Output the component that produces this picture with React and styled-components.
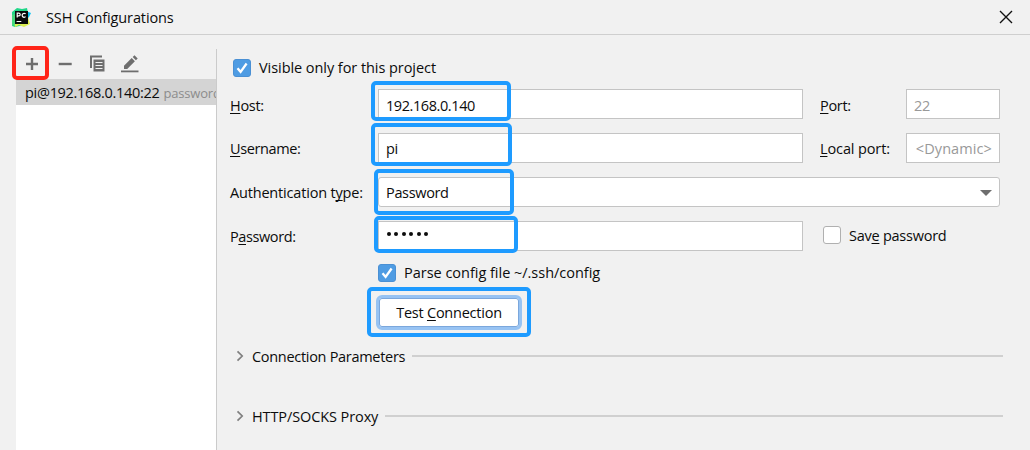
import React from "react";
import styled, { createGlobalStyle } from "styled-components";

const Global = createGlobalStyle`
  * { box-sizing: border-box; }
  body { margin: 0; background: #f1f1f1; overflow: hidden; }
`;
const Dialog = styled.div`
  position: relative;
  width: 1030px;
  height: 450px;
  overflow: hidden;
  display: flex;
  flex-direction: column;
  background: #f1f1f1;
  color: #0c0c0c;
  font: 14.5px/20px "Open Sans", "Noto Sans", sans-serif;
`;
const TitleBar = styled.header`
  display: flex;
  align-items: center;
  height: 35px;
  flex: none;
  padding: 0 16px 0 11px;
  border-bottom: 1px solid #cfcfcf;
`;
const Text = styled.span`
  white-space: pre;
  letter-spacing: ${(p) => p.$ls ?? -0.3}px;
  u { text-decoration-thickness: 1px; text-underline-offset: 2px; text-decoration-skip-ink: none; }
`;
const Title = styled(Text)`
  flex: 1;
  margin: 1px 0 0 14px;
`;
const Body = styled.div`
  display: flex;
  flex: 1;
`;
const Sidebar = styled.aside`
  display: flex;
  flex-direction: column;
  width: 201px;
  margin: 14px 0 0 16px;
  border-right: 1px solid #cbcbcb;
`;
const Toolbar = styled.div`
  display: flex;
  height: 30px;
  padding: 5px 0 0 6px;
  gap: 13px;
`;
const List = styled.div`
  flex: 1;
  background: #fff;
`;
const Entry = styled.div`
  display: flex;
  gap: 4px;
  height: 26px;
  padding: 4px 0 0 9px;
  overflow: hidden;
  background: #d4d4d4;
`;
const Hint = styled(Text)`
  color: #8c8c8c;
  font-size: 13px;
  line-height: 21px;
`;
const Form = styled.main`
  flex: 1;
  padding: 19px 0 0 13px;
`;
const Row = styled.div`
  display: flex;
  align-items: center;
  height: ${(p) => p.$h ?? 44}px;
  padding-left: ${(p) => p.$indent ?? 0}px;
`;
const Label = styled.div`
  width: ${(p) => p.$w ?? 148}px;
  margin-left: ${(p) => p.$gap ?? 0}px;
  padding-top: ${(p) => p.$top ?? 2}px;
`;
const Field = styled.div`
  display: flex;
  align-items: center;
  width: ${(p) => p.$w}px;
  height: 30px;
  padding: ${(p) => p.$top ?? 2}px 7px 0;
  border: 1px solid #c4c4c4;
  border-radius: ${(p) => (p.$combo ? 3 : 0)}px;
  background: #fff;
  color: ${(p) => (p.$muted ? "#999" : "#0c0c0c")};
  justify-content: space-between;
`;
const Dots = styled.div`
  display: flex;
  gap: 3.4px;
  margin: -7px 0 0 1px;
`;
const Dot = styled.i`
  width: 4px;
  height: 4px;
  border-radius: 50%;
  background: #0c0c0c;
`;
const CheckBox = styled.span`
  display: flex;
  align-items: center;
  justify-content: center;
  width: 18px;
  height: 18px;
  margin: ${(p) => (p.$on ? "0 8px 0 0" : "-3px 8px 0 0")};
  border: 1px solid ${(p) => (p.$on ? "#4a90d4" : "#b0b0b0")};
  border-radius: 3px;
  background: ${(p) => (p.$on ? "#4f9ce3" : "#fff")};
`;
const Button = styled.div`
  display: flex;
  align-items: center;
  justify-content: center;
  width: 146px;
  height: 35px;
  padding-top: 2px;
  border: 3px solid #97c3f3;
  border-radius: 6px;
  background: #fff;
  box-shadow: inset 0 0 0 1px #7ba7dc;
`;
const Rule = styled.div`
  flex: 1;
  height: 2px;
  margin: 0 27px 0 7px;
  background: #d0d0d0;
`;
const SectionTitle = styled(Text)`
  margin-left: 8px;
  padding-top: 1px;
`;
const Highlight = styled.div`
  position: absolute;
  left: ${(p) => p.$x}px;
  top: ${(p) => p.$y}px;
  width: ${(p) => p.$w}px;
  height: ${(p) => p.$h}px;
  border: 4px solid ${(p) => p.$c ?? "#1e9bff"};
  border-radius: 5px;
`;

const Check = ({ on }) => (
  <CheckBox $on={on}>
    {on && (
      <svg width="16" height="16" viewBox="0 0 16 16" fill="none" stroke="#fff" strokeWidth="2.3">
        <path d="M3.5 8.2 6.6 11.8 12.6 3.5" />
      </svg>
    )}
  </CheckBox>
);
const Section = ({ title, ls }) => (
  <Row $h={40} $indent={5}>
    <svg width="9" height="12" fill="none" stroke="#808080" strokeWidth="1.7"><path d="M2.5 1.3 7.2 6 2.5 10.7" /></svg>
    <SectionTitle $ls={ls}>{title}</SectionTitle>
    <Rule />
  </Row>
);
const Logo = () => (
  <svg width="21" height="21" viewBox="0 0 21 21">
    <path d="M1 5 6 1l5 1 5-1 1 5-4 12-9 2-3-1Z" fill="#21d789" />
    <path d="M15 4 20 6 18 10 15 13Z" fill="#07c3f2" />
    <path d="M3 15 5 14 16 17 17 10 19 17 13 20 8 18 4 20Z" fill="#dcef51" />
    <path d="M1 8 4 7v10l-3 2Z" fill="#46d97e" />
    <rect x="4" y="4" width="13" height="13" fill="#080b0a" />
    <g fill="none" stroke="#fff" strokeWidth="1.2">
      <path d="M6.2 10.6V6.2h1.7a1.2 1.2 0 0 1 0 2.6H6.2M14.6 6.9a2 2 0 1 0 0 2.8M5.6 14.5h4.7" />
    </g>
  </svg>
);

export default function App() {
  return (
    <Dialog>
      <Global />
      <TitleBar>
        <Logo />
        <Title $ls={-0.12}>SSH Configurations</Title>
        <svg width="16" height="16" fill="none" stroke="#111" strokeWidth="1.35"><path d="m2 2 12 12M14 2 2 14" /></svg>
      </TitleBar>
      <Body>
        <Sidebar>
          <Toolbar>
            <svg width="20" height="20" stroke="#6e6e6e" strokeWidth="2.4"><path d="M4 10h12M10 4v12" /></svg>
            <svg width="20" height="20" stroke="#6e6e6e" strokeWidth="2.4"><path d="M3.7 10h13" /></svg>
            <svg width="20" height="20" fill="none" stroke="#6e6e6e">
              <path d="M3 14V2.6h11" strokeWidth="2" />
              <path d="M5.5 5.5h11v12h-11Z" fill="#6e6e6e" stroke="none" />
              <path d="M7.5 8.5h7M7.5 11.5h7M7.5 14.5h7" stroke="#f1f1f1" strokeWidth="1.1" />
            </svg>
            <svg width="20" height="20" fill="#6e6e6e">
              <path d="M3 11.8 10.7 4.1l3.2 3.2L6.2 15H3Z M11.7 3.1l1.8-1.8 3.2 3.2-1.8 1.8Z" />
              <path d="M0 16.5h17.5v1.8H0Z" />
            </svg>
          </Toolbar>
          <List>
            <Entry>
              <Text>pi@192.168.0.140:22</Text>
              <Hint $ls={-0.2}>password</Hint>
            </Entry>
          </List>
        </Sidebar>
        <Form>
          <Row $h={28} $indent={3}><Check on /><Text $ls={-0.06}>Visible only for this project</Text></Row>
          <Row>
            <Label $top={3}><Text><u>H</u>ost:</Text></Label>
            <Field $w={425} $top={3}><Text $ls={-0.42}>192.168.0.140</Text></Field>
            <Label $w={86} $gap={17} $top={3}><Text><u>P</u>ort:</Text></Label>
            <Field $w={94} $top={3} $muted><Text>22</Text></Field>
          </Row>
          <Row>
            <Label><Text $ls={-0.38}><u>U</u>sername:</Text></Label>
            <Field $w={425}><Text>pi</Text></Field>
            <Label $w={86} $gap={17}><Text $ls={-0.12}><u>L</u>ocal port:</Text></Label>
            <Field $w={94} $muted><Text />
              <Text $ls={0.1}>{"<Dynamic>"}</Text>
            </Field>
          </Row>
          <Row>
            <Label><Text $ls={-0.18}>Authentication t<u>y</u>pe:</Text></Label>
            <Field $w={622} $top={1} $combo>
              <Text $ls={-0.34}>Password</Text>
              <svg width="12" height="8"><path d="M0 1h12L6 7Z" fill="#6e6e6e" /></svg>
            </Field>
          </Row>
          <Row>
            <Label><Text $ls={-0.4}>P<u>a</u>ssword:</Text></Label>
            <Field $w={425}><Dots>{[0, 1, 2, 3, 4, 5].map((i) => <Dot key={i} />)}</Dots></Field>
            <Row $indent={20}><Check /><Text $ls={-0.25}>Sav<u>e</u> password</Text></Row>
          </Row>
          <Row $h={30} $indent={148}><Check on /><Text $ls={-0.02}>Parse config file ~/.ssh/config</Text></Row>
          <Row $h={48} $indent={146}><Button><Text $ls={-0.23}>Test <u>C</u>onnection</Text></Button></Row>
          <Section title="Connection Parameters" />
          <Row $h={20} />
          <Section title="HTTP/SOCKS Proxy" ls={-0.1} />
        </Form>
      </Body>
      <Highlight $x={12} $y={46} $w={37} $h={34} $c="#ff2418" />
      <Highlight $x={371} $y={81} $w={140} $h={40} />
      <Highlight $x={371} $y={123} $w={141} $h={43} />
      <Highlight $x={374} $y={169} $w={140} $h={46} />
      <Highlight $x={374} $y={216} $w={144} $h={37} />
      <Highlight $x={367} $y={287} $w={164} $h={50} />
    </Dialog>
  );
}
